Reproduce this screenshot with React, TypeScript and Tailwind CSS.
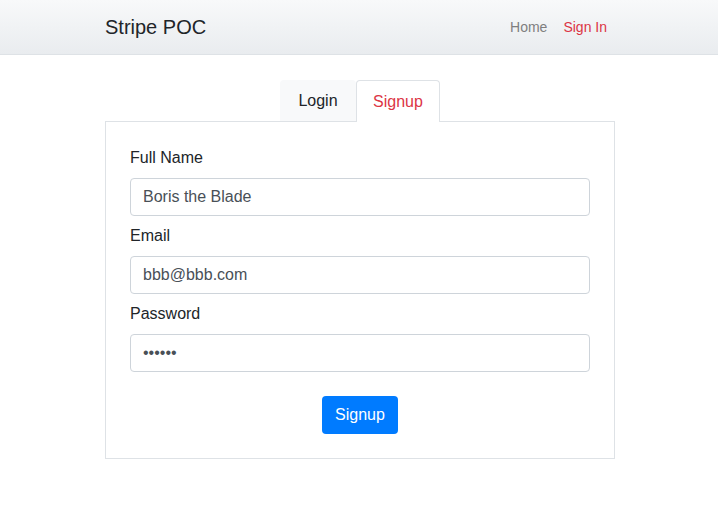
export default function App() {
  return (
    <div className="min-h-[508px] bg-white text-[#212529] font-['Liberation_Sans',Arial,sans-serif]">
      <nav className="h-[55px] border-b border-[#dee2e6] bg-gradient-to-b from-[#f8f9fa] to-[#e9ecef]">
        <div className="ml-[105px] flex h-[54px] w-[510px] items-center justify-between">
          <span className="text-[20px] leading-[30px]">Stripe POC</span>
          <div className="flex text-[14px] leading-[21px]">
            <a className="px-2 text-[#7f7f7f]">Home</a>
            <a className="px-2 text-[#dc3545]">Sign In</a>
          </div>
        </div>
      </nav>

      <main className="ml-[105px] mt-[25px] w-[510px]">
        <div className="flex justify-center">
          <button className="h-[41px] w-[76px] rounded-t-[4px] border border-transparent bg-[#f8f9fa] text-[16px] text-[#212529]">
            Login
          </button>
          <button className="relative -mb-px h-[42px] w-[84px] rounded-t-[4px] border border-b-0 border-[#dee2e6] bg-white text-[16px] text-[#dc3545]">
            Signup
          </button>
        </div>
        <div className="border border-[#dee2e6] p-6">
          <form className="flex flex-col">
            <label className="mb-2 text-[16px] leading-6">Full Name</label>
            <input
              className="mb-2 h-[38px] rounded-[4px] border border-[#ced4da] px-3 text-[16px] text-[#495057] outline-none"
              defaultValue="Boris the Blade"
            />
            <label className="mb-2 text-[16px] leading-6">Email</label>
            <input
              className="mb-2 h-[38px] rounded-[4px] border border-[#ced4da] px-3 text-[16px] text-[#495057] outline-none"
              defaultValue="bbb@bbb.com"
            />
            <label className="mb-2 text-[16px] leading-6">Password</label>
            <input
              type="password"
              className="h-[38px] rounded-[4px] border border-[#ced4da] px-3 text-[16px] text-[#495057] outline-none"
              defaultValue="secret"
            />
            <div className="mt-6 flex justify-center">
              <button
                type="button"
                className="h-[38px] w-[76px] rounded-[4px] bg-[#007bff] text-[16px] text-white"
              >
                Signup
              </button>
            </div>
          </form>
        </div>
      </main>
    </div>
  );
}
